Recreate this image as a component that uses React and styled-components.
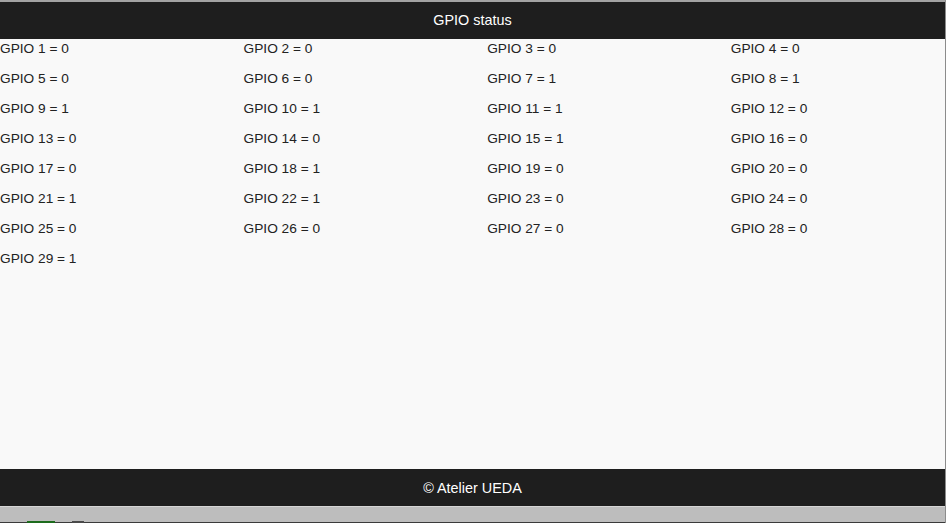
import React from "react"
import styled, { createGlobalStyle } from "styled-components"

const GlobalStyle = createGlobalStyle`
  html, body {
    margin: 0;
    padding: 0;
    background: #8c8c8c;
    overflow: hidden;
  }
  body {
    font-family: "Liberation Sans", Arial, Helvetica, sans-serif;
  }
`

const Page = styled("div")`
  display: flex;
  flex-direction: column;
  width: 945px;
  height: 523px;
  overflow: hidden;
`

const TopEdge = styled("div")`
  height: 2px;
  background: #a3a3a3;
`

const Bar = styled("div")`
  height: 37px;
  flex: none;
  display: flex;
  align-items: center;
  justify-content: center;
  background: #1e1e1e;
  color: #ffffff;
  font-size: 14.4px;
  padding-bottom: ${p => (p.$bottom ? "0" : "1px")};
  box-sizing: border-box;
`

const Main = styled("main")`
  flex: 1;
  background: #f9f9f9;
  overflow: hidden;
`

const Grid = styled("div")`
  display: grid;
  grid-template-columns: repeat(4, 243.6px);
  grid-auto-rows: 30px;
  width: 974px;
`

const Cell = styled("div")`
  font-size: 13.7px;
  line-height: 20px;
  color: #222222;
  white-space: nowrap;
`

const StatusBar = styled("div")`
  height: 17px;
  flex: none;
  display: flex;
  align-items: flex-end;
  padding-left: 27px;
  box-sizing: border-box;
  background: #bdbdbd;
  border-top: 1px solid #d6d6d6;
  border-bottom: 1px solid #3a3a3a;
`

const Indicator = styled("div")`
  width: ${p => p.$width}px;
  height: 2px;
  margin-bottom: -1px;
  background: ${p => p.$color};
  margin-right: ${p => p.$gap || 0}px;
`

const values = [
  0, 0, 0, 0, 0, 0, 1, 1, 1, 1, 1, 0, 0, 0, 1, 0, 0, 1, 0, 0, 1, 1, 0, 0, 0, 0,
  0, 0, 1,
]

const App = () => (
  <>
    <GlobalStyle />
    <Page>
      <TopEdge />
      <Bar>GPIO status</Bar>
      <Main>
        <Grid>
          {values.map((v, i) => (
            <Cell key={i}>{`GPIO ${i + 1} = ${v}`}</Cell>
          ))}
        </Grid>
      </Main>
      <Bar $bottom>© Atelier UEDA</Bar>
      <StatusBar>
        <Indicator $color="#1c6b1c" $width={28} $gap={17} />
        <Indicator $color="#4a4a4a" $width={12} />
      </StatusBar>
    </Page>
  </>
)

export default App
